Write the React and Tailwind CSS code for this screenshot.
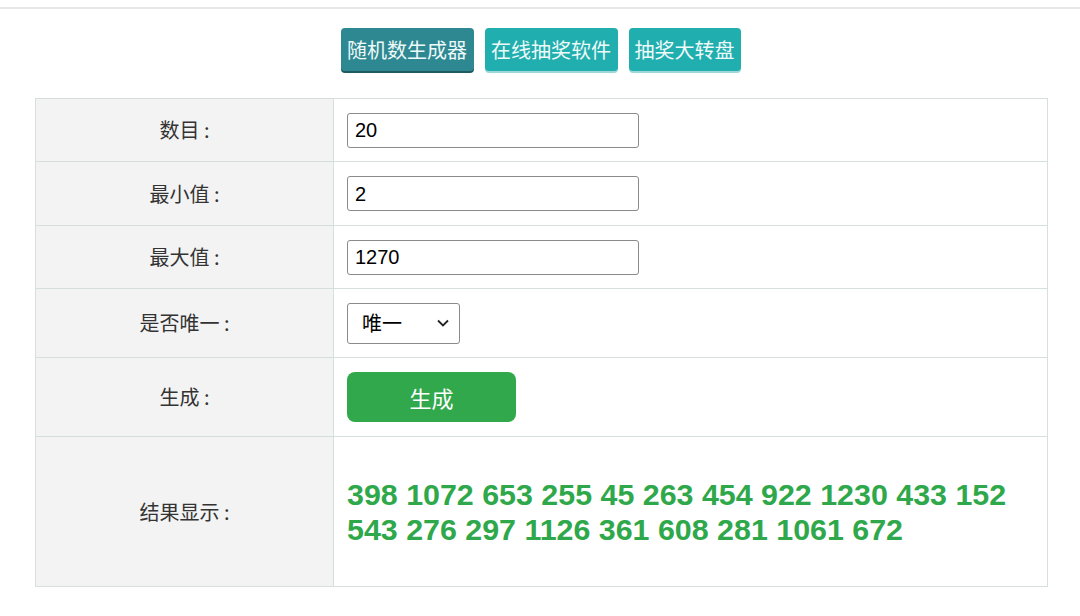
import React from "react";

const rows = [
  { label: "数目 :", h: "h-[63px]", kind: "input", value: "20" },
  { label: "最小值 :", h: "h-[64px]", kind: "input", value: "2" },
  { label: "最大值 :", h: "h-[63px]", kind: "input", value: "1270" },
  { label: "是否唯一 :", h: "h-[69px]", kind: "select" },
  { label: "生成 :", h: "h-[79px]", kind: "button" },
];

function Cell({ row }) {
  if (row.kind === "input") {
    return (
      <div className="w-[292px] h-[35px] border border-[#8a8a8a] rounded-[3px] bg-white flex items-center pl-[7px] text-[20px] text-black font-['Liberation_Sans',Arial,sans-serif]">
        {row.value}
      </div>
    );
  }
  if (row.kind === "select") {
    return (
      <div className="w-[113px] h-[41px] border border-[#8a8a8a] rounded-[3px] bg-white flex items-center justify-between pl-[14px] pr-[9px] text-[20px] text-black">
        <span>唯一</span>
        <svg width="14" height="10" viewBox="0 0 14 10" fill="none">
          <path d="M2 2.5 L7 7.5 L12 2.5" stroke="#222" strokeWidth="1.8" />
        </svg>
      </div>
    );
  }
  return (
    <div className="w-[169px] h-[50px] rounded-[8px] bg-[#30a84b] flex items-center justify-center text-white text-[22px]">
      生成
    </div>
  );
}

export default function App() {
  return (
    <div className="w-[1080px] h-[616px] bg-white font-['Noto_Sans_CJK_SC','Microsoft_YaHei',sans-serif] overflow-hidden">
      <div className="h-[7px]" />
      <div className="h-[2px] bg-[#e8e8e8]" />
      <div className="flex justify-center gap-[11px] pt-[19px] ml-[1px]">
        <div className="w-[133px] h-[43px] rounded-[4px] bg-[#2e8892] shadow-[0_2px_0_#1e5a60] text-[#eefafa] text-[20px] flex items-center justify-center">
          随机数生成器
        </div>
        <div className="w-[133px] h-[43px] rounded-[4px] bg-[#21aeae] shadow-[0_2px_0_#9dd7d7] text-[#eefafa] text-[20px] flex items-center justify-center">
          在线抽奖软件
        </div>
        <div className="w-[112px] h-[43px] rounded-[4px] bg-[#21aeae] shadow-[0_2px_0_#9dd7d7] text-[#eefafa] text-[20px] flex items-center justify-center">
          抽奖大转盘
        </div>
      </div>
      <div className="ml-[35px] mt-[27px] w-[1013px] border border-[#d6e0da]">
        {rows.map((row, i) => (
          <div key={i} className={`flex ${row.h} border-b border-[#d6e0da]`}>
            <div className="w-[298px] bg-[#f3f3f3] border-r border-[#d6e0da] flex items-center justify-center text-[20px] text-[#333]">
              {row.label}
            </div>
            <div className="flex-1 flex items-center pl-[13px]">
              <Cell row={row} />
            </div>
          </div>
        ))}
        <div className="flex h-[149px]">
          <div className="w-[298px] bg-[#f3f3f3] border-r border-[#d6e0da] flex items-center justify-center text-[20px] text-[#333]">
            结果显示 :
          </div>
          <div className="flex-1 flex items-center pl-[13px] pr-[20px]">
            <div className="font-['Liberation_Sans',Arial,sans-serif] font-bold text-[30.4px] leading-[35px] text-[#2ea84a]">
              398 1072 653 255 45 263 454 922 1230 433 152
              <br />
              543 276 297 1126 361 608 281 1061 672
            </div>
          </div>
        </div>
      </div>
    </div>
  );
}
